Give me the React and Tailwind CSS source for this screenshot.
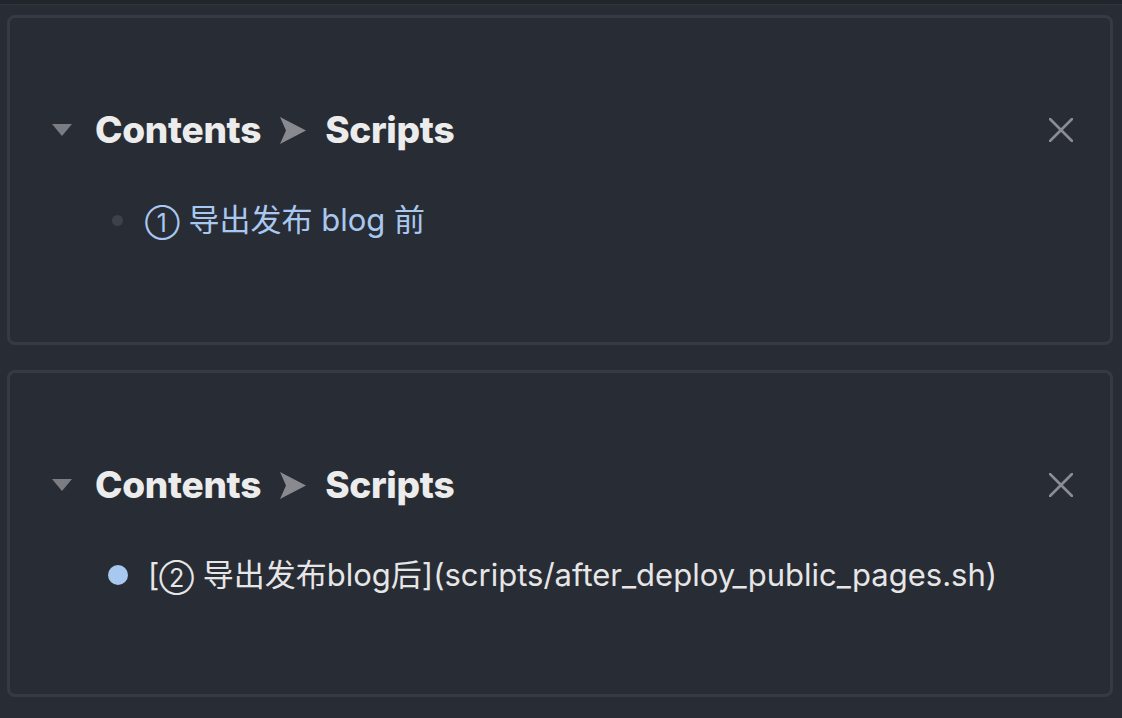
import React from 'react';

const font = { fontFamily: 'Inter, "Noto Sans CJK SC", sans-serif' };

const Caret = () => (
  <svg width="20" height="12" viewBox="0 0 20 12" className="shrink-0">
    <polygon points="0,0 20,0 10,12" fill="#7b7d83" />
  </svg>
);

const Arrow = () => (
  <svg width="26" height="27" viewBox="0 0 26 27" className="shrink-0">
    <polygon points="0,0 26,13.5 0,27 6,13.5" fill="#898a8f" />
  </svg>
);

const Close = () => (
  <svg width="24" height="24" viewBox="0 0 24 24" className="shrink-0">
    <path d="M1 1 L23 23 M23 1 L1 23" stroke="#8b8d93" strokeWidth="2.6" strokeLinecap="round" />
  </svg>
);

const Circled = ({ children }) => (
  <span className="inline-block align-[-1px] text-[25px] leading-none">{children}</span>
);

const Card = ({ height, children }) => (
  <div className={`ml-[7px] w-[1106px] ${height} rounded-[8px] border-[3px] border-[#363a45] bg-[#282c35]`}>
    <div className="pt-[92px]">
      <div className="flex h-[40px] items-center pl-[42px] pr-[37px]">
        <Caret />
        <div className="ml-[23px] flex items-center gap-[19px] text-[37px] font-extrabold tracking-[-0.3px] text-[#ececec]">
          <span>Contents</span>
          <Arrow />
          <span>Scripts</span>
        </div>
        <div className="flex-1" />
        <Close />
      </div>
      <div className="mt-[50px] flex h-[40px] items-center">{children}</div>
    </div>
  </div>
);

export default function App() {
  return (
    <div className="min-h-[718px] bg-[#282c35]" style={font}>
      <div className="h-[5px] bg-[#22252b] border-b border-[#30343d]" />
      <div className="flex flex-col gap-[25px] pt-[10px]">
        <Card height="h-[330px]">
          <div className="ml-[102px] h-[11px] w-[11px] rounded-full bg-[#3c414c]" />
          <span className="ml-[22px] text-[31px] text-[#a9c8ef]">
            <Circled>①</Circled> 导出发布 blog 前
          </span>
        </Card>
        <Card height="h-[327px]">
          <div className="ml-[98px] h-[20px] w-[20px] rounded-full bg-[#a8c9ef]" />
          <span className="ml-[20px] text-[31px] text-[#e6e6e6]">
            [<Circled>②</Circled> 导出发布blog后](scripts/after_deploy_public_pages.sh)
          </span>
        </Card>
      </div>
    </div>
  );
}
